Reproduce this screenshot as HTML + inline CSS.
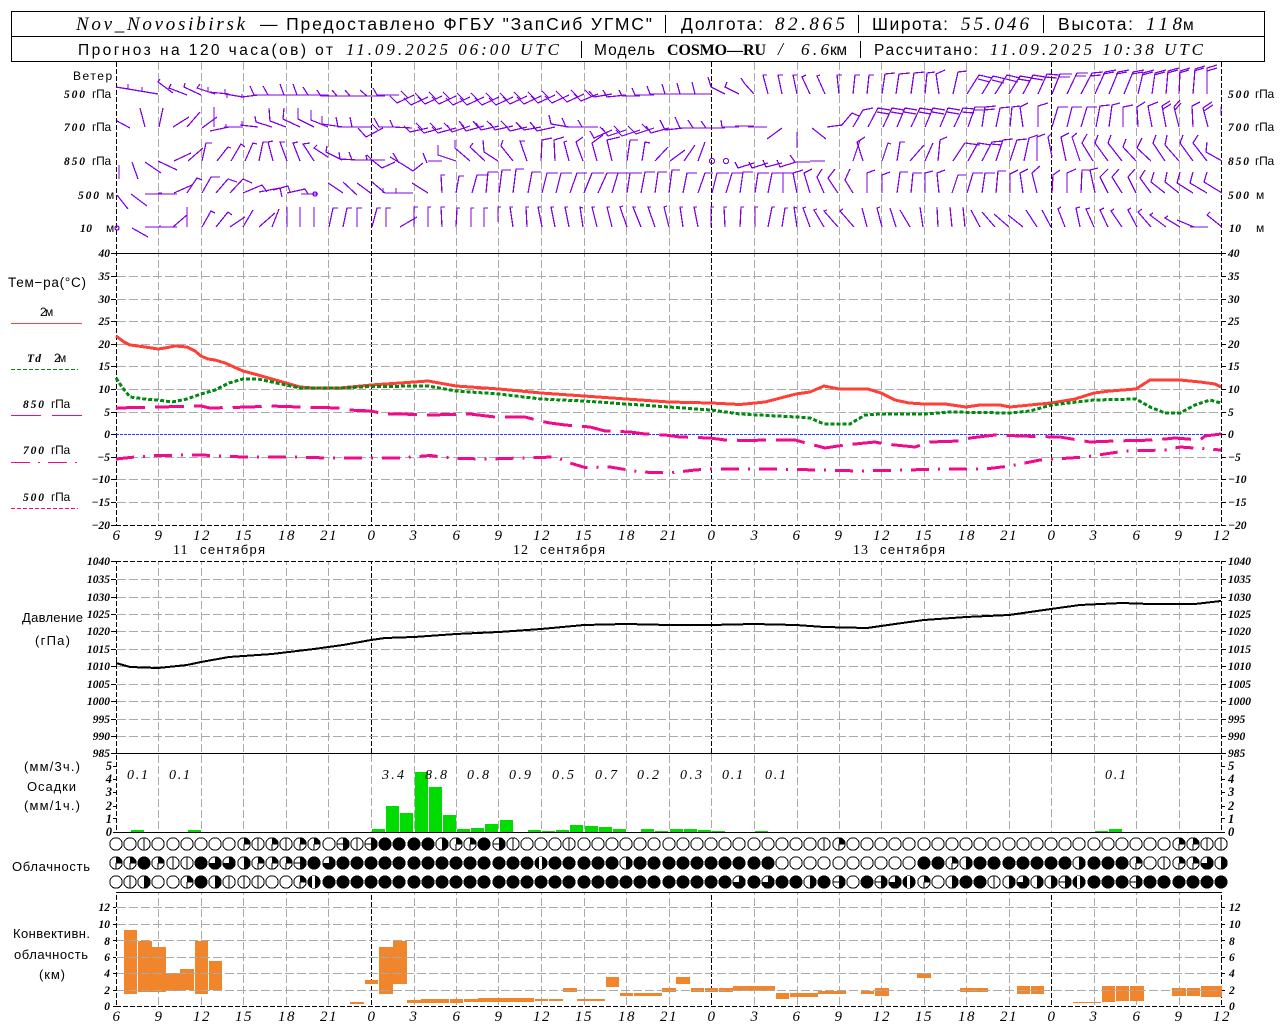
<!DOCTYPE html>
<html lang="ru"><head><meta charset="utf-8"><title>Nov_Novosibirsk</title>
<style>
html,body{margin:0;padding:0;background:#fff}
svg{display:block}
text{fill:#000;font-family:"Liberation Sans",sans-serif;font-size:13px;shape-rendering:auto}
.h1{font-size:17.5px}
.h2{font-size:15.5px}
.i{font-family:"Liberation Serif",serif;font-style:italic}
.a{font-family:"Liberation Serif",serif;font-style:italic;font-weight:bold;font-size:11.5px}
.x{font-family:"Liberation Serif",serif;font-style:italic;font-size:15px;text-anchor:middle;letter-spacing:1.5px}
.l{font-size:12px;letter-spacing:.8px}
.e{text-anchor:end}
.m{text-anchor:middle}
.w{fill:none;stroke:#7f00e6;stroke-width:1.25}
</style></head><body>
<svg width="1280" height="1024" viewBox="0 0 1280 1024" shape-rendering="crispEdges" xmlns="http://www.w3.org/2000/svg">
<defs>
<circle id="c" r="6.2" fill="#fff" stroke="#000"/>
<g id="o"><use href="#c"/></g>
<g id="v"><use href="#c"/><path d="M0-6V6" stroke="#000"/></g>
<g id="q"><use href="#c"/><path d="M0 0V-6A6 6 0 0 1 6 0Z"/><path d="M0 0V6M0 0H6" stroke="#000"/></g>
<g id="h"><use href="#c"/><path d="M0-6A6 6 0 0 1 0 6Z"/></g>
<g id="t"><use href="#c"/><path d="M0-6A6 6 0 1 1-6 0H0Z"/></g>
<g id="e"><use href="#c"/><path d="M0-6A6 6 0 0 1 0 6Z"/><path d="M-6 0H0" stroke="#000"/></g>
<circle id="f" r="6.6"/>
<g id="n"><circle r="6.6"/><rect x="-2" y="-6" width="3" height="12" fill="#fff"/></g>
</defs>
<rect width="1280" height="1024" fill="#fff"/>

<!-- vertical grid -->
<path fill="none" stroke="#aaa" stroke-dasharray="8 3" d="M158.5 62V1006M201.5 62V1006M243.5 62V1006M286.5 62V1006M328.5 62V1006M414.5 62V1006M456.5 62V1006M498.5 62V1006M541.5 62V1006M584.5 62V1006M626.5 62V1006M669.5 62V1006M754.5 62V1006M797.5 62V1006M839.5 62V1006M881.5 62V1006M924.5 62V1006M966.5 62V1006M1009.5 62V1006M1094.5 62V1006M1136.5 62V1006M1179.5 62V1006"/>
<path fill="none" stroke="#000" stroke-dasharray="5 2" d="M116.5 62V1006M371.5 62V1006M711.5 62V1006M1051.5 62V1006M1221.5 62V1006"/>
<path fill="none" stroke="#fff" d="M371.5 754V832M711.5 754V832M1051.5 754V832"/>
<path fill="none" stroke="#aaa" stroke-dasharray="8 3" d="M371.5 754V832M711.5 754V832M1051.5 754V832"/>
<rect x="100" y="526" width="1135" height="35" fill="#fff"/>
<rect x="100" y="833" width="1135" height="59" fill="#fff"/>

<!-- horizontal grid -->
<path fill="none" stroke="#aaa" stroke-dasharray="9 3" d="M117 276.5H1221M117 299.5H1221M117 321.5H1221M117 344.5H1221M117 366.5H1221M117 389.5H1221M117 412.5H1221M117 457.5H1221M117 479.5H1221M117 502.5H1221M117 579.5H1221M117 597.5H1221M117 614.5H1221M117 631.5H1221M117 649.5H1221M117 666.5H1221M117 684.5H1221M117 701.5H1221M117 719.5H1221M117 736.5H1221"/>

<!-- solid and dotted horizontals, ticks -->
<path fill="none" stroke="#000" d="M116 253.5H1222M116 753.5H1222M116 832.5H1222M116 892.5H1222"/>
<path fill="none" stroke="#000" stroke-dasharray="5 2" d="M116 525.5H1222M116 561.5H1222M116 1006.5H1222"/>
<path fill="none" stroke="#000" d="M111 253.5h5M111 276.5h5M111 299.5h5M111 321.5h5M111 344.5h5M111 366.5h5M111 389.5h5M111 412.5h5M111 434.5h5M111 457.5h5M111 479.5h5M111 502.5h5M111 525.5h5M1221 253.5h5M1221 276.5h5M1221 299.5h5M1221 321.5h5M1221 344.5h5M1221 366.5h5M1221 389.5h5M1221 412.5h5M1221 434.5h5M1221 457.5h5M1221 479.5h5M1221 502.5h5M1221 525.5h5M111 561.5h5M111 579.5h5M111 597.5h5M111 614.5h5M111 631.5h5M111 649.5h5M111 666.5h5M111 684.5h5M111 701.5h5M111 719.5h5M111 736.5h5M111 753.5h5M1221 561.5h5M1221 579.5h5M1221 597.5h5M1221 614.5h5M1221 631.5h5M1221 649.5h5M1221 666.5h5M1221 684.5h5M1221 701.5h5M1221 719.5h5M1221 736.5h5M1221 753.5h5M113 766.5h3M113 779.5h3M113 792.5h3M113 806.5h3M113 818.5h3M113 832.5h3M1221 766.5h4M1221 779.5h4M1221 792.5h4M1221 806.5h4M1221 818.5h4M1221 832.5h4M113 907.5h3M113 924.5h3M113 940.5h3M113 957.5h3M113 973.5h3M113 990.5h3M113 1006.5h3M1221 907.5h4M1221 924.5h4M1221 940.5h4M1221 957.5h4M1221 973.5h4M1221 990.5h4M1221 1006.5h4"/>

<!-- header -->
<rect x="11.5" y="11.5" width="1253" height="50" fill="none" stroke="#000"/>
<path d="M11 36.5H1264M665.5 15V33M858.5 15V33M1043.5 15V33M581.5 41V58M860.5 41V58" stroke="#000" fill="none"/>
<text class="h1 i" x="76" y="30" textLength="169" style="font-size:19px">Nov_Novosibirsk</text>
<text class="h1" x="260" y="30" textLength="392">— Предоставлено ФГБУ "ЗапСиб УГМС"</text>
<text class="h1" x="681" y="30" textLength="82">Долгота:</text>
<text class="h1 i" x="775" y="30" textLength="70" style="font-size:19px">82.865</text>
<text class="h1" x="872" y="30" textLength="76">Широта:</text>
<text class="h1 i" x="961" y="30" textLength="68" style="font-size:19px">55.046</text>
<text class="h1" x="1058" y="30" textLength="75">Высота:</text>
<text class="h1 i" x="1146" y="30" textLength="36" style="font-size:19px">118</text>
<text class="h2" x="1183" y="30" textLength="10">м</text>
<text class="h2" x="78" y="55" textLength="255">Прогноз на 120 часа(ов) от</text>
<text class="h2 i" x="346" y="55" textLength="213" style="font-size:17px">11.09.2025 06:00 UTC</text>
<text class="h2" x="594" y="55" textLength="61">Модель</text>
<text class="h2" x="667" y="55" textLength="99" style="font-family:'Liberation Serif',serif;font-weight:bold;font-size:16px">COSMO—RU</text>
<text class="h2 i" x="778" y="55" style="font-size:18px">/</text>
<text class="h2 i" x="801" y="55" textLength="28" style="font-size:17px">6.6</text>
<text class="h2" x="830" y="55" textLength="17">км</text>
<text class="h2" x="874" y="55" textLength="104">Рассчитано:</text>
<text class="h2 i" x="990" y="55" textLength="213" style="font-size:17px">11.09.2025 10:38 UTC</text>

<!-- wind labels -->
<text class="l" x="73" y="80" textLength="40">Ветер</text>
<g>
<text class="a" x="64" y="98" textLength="21">500</text><text class="l" x="92" y="98" textLength="20">гПа</text>
<text class="a" x="64" y="131" textLength="21">700</text><text class="l" x="92" y="131" textLength="20">гПа</text>
<text class="a" x="64" y="165" textLength="21">850</text><text class="l" x="92" y="165" textLength="20">гПа</text>
<text class="a" x="78" y="199" textLength="21">500</text><text class="l" x="106" y="199">м</text>
<text class="a" x="80" y="232" textLength="12">10</text><text class="l" x="106" y="232">м</text>
<text class="a" x="1228" y="98" textLength="21">500</text><text class="l" x="1255" y="98" textLength="20">гПа</text>
<text class="a" x="1228" y="131" textLength="21">700</text><text class="l" x="1255" y="131" textLength="20">гПа</text>
<text class="a" x="1228" y="165" textLength="21">850</text><text class="l" x="1255" y="165" textLength="20">гПа</text>
<text class="a" x="1228" y="199" textLength="21">500</text><text class="l" x="1256" y="199">м</text>
<text class="a" x="1229" y="232" textLength="12">10</text><text class="l" x="1256" y="232">м</text>
</g>

<!-- wind barbs row 1 -->
<path class="w" d="M158 94L116 87M128 89v-5M142 92v-5M173 93L158 82l2-3M187 95L169 88l2-4M201 95L184 87l1-4M215 94L197 88l3-4M229 94L208 92v-5M243 97L225 94v-5M258 95L242 97M227 93v5M242 94v4M272 95H254L250 86M286 95H268L263 86M300 95H284L280 84M314 95H297L293 84M329 95H308L303 87M343 96H321L317 90M357 96H337L332 90M371 96H350L345 90M385 96H367L360 90M399 95H377L373 88M414 95L397 103L390 96M408 98L401 91M428 97L411 105L404 98M422 100L415 93M442 96L425 104L418 97M436 99L429 92M456 96L439 104L432 97M450 99L443 92M470 97L453 105L446 98M464 100L457 93M484 97L467 105L460 98M478 100L471 93M499 97L482 105L475 98M493 100L486 93M513 97L496 105L489 98M507 100L500 93M527 96L510 104L503 97M521 99L514 92M541 96L524 104L517 97M535 99L528 92M555 95L538 103L531 96M549 98L542 91M569 95L552 103L545 96M563 98L556 91M584 94L567 102L560 95M578 97L571 90M598 94L581 101L574 94M592 97L585 90M612 94L594 97L589 91M626 95L607 97L603 90M640 96L622 96L619 90M654 95H635L632 88M669 94H650L647 86M683 94H665L662 84M697 94H680L677 83M711 94H695L692 82M725 94L711 87L708 77M739 94L725 87L727 82M754 94L745 84L741 78M768 94L763 75h4M782 94L778 75h5M797 94L793 75h4M810 94L802 77l4-2M825 94L817 76l3-1M839 94L837 75h5M853 94L855 75h5M867 94L869 75h5M882 94L885 74l10-1M896 94L899 74l11-1M911 94L914 73l11-1M925 94L927 73l8-1M939 94L936 74l9-4M953 94L958 72l9-1M967 94L979 75l13 3m-14 1l12 3M982 94L993 76l13 3m-14 1l12 3M995 94L1007 75l13 3m-14 1l12 3M1009 94L1020 76l12 2m-14 1l12 2M1023 94L1033 75l12 2m-14 1l12 2M1038 94L1047 74l12 1m-14 2l12 1M1052 94L1060 74l12 0m-14 3l12 0M1067 94L1077 73l11 0m-13 3l11 0M1081 94L1092 73l11-1m-13 4l11-1M1095 94L1105 72l11-2m-13 4l11-2M1109 94L1118 72l11-2m-13 4l11-2M1124 94L1133 72l11-2m-12 4l11-2M1138 94L1143 73l11-3m-12 5l11-3M1152 94L1155 73l11-3m-12 5l11-3M1166 94L1168 71l11-3m-12 5l11-3M1179 94L1180 71l10-3m-11 5l10-3M1193 94L1195 69l10-3m-11 5l10-3M1207 94V68l10-3m-10 6l10-3"/>
<!-- wind barbs row 2 -->
<path class="w" d="M130 128L117 121M145 127L140 108M159 127L163 108M173 127L189 117M187 127L200 112M202 128L217 117M214 127V107M229 127L210 131M243 127H224M226 127v-3M258 127L240 125M242 125v-4M272 127L256 122L255 116M286 127L270 121L269 108M300 127L283 119L284 108M314 127L298 119V108M328 127L311 120V110M343 127L322 124V116M357 127H338L336 117M371 127H352L350 117M383 128L366 137L358 128M378 130L372 124M397 127H379L374 118M412 128L393 127L390 120M428 128L410 132L404 126M422 129L416 123M442 128L424 133L418 127M436 129L430 123M456 128L438 133L432 127M450 129L444 123M470 126L452 132L447 125M464 127L459 121M484 126L466 131L461 124M478 127L473 121M499 126L481 130L476 123M493 127L487 121M513 126L495 130L490 123M507 127L501 121M527 127L510 131L505 125M521 128L516 122M541 127L524 130L518 124M535 128L530 122M555 127L537 131L533 126M569 127L551 124L549 115M584 127H566L562 118M598 127H582L578 120M612 130L594 138L590 131M606 133L600 127M626 130L608 136L602 128M620 132L614 126M640 130L622 136L616 130M634 132L628 126M654 128L636 134L630 128M648 130L642 124M669 128L651 133L646 126M683 128L665 130L660 120M697 128H680L675 117M711 128H693L688 120M725 128H706L701 121M739 127H722L721 120M754 126H735M767 127H748M767 139L782 128M797 132V148M812 128L826 139M827 127L842 125L851 114M841 126L852 113l7 3M853 127L863 110l10-2M868 127L878 108l12 2m-13 2l12 2M883 127L892 108l12 2m-13 2l12 2M897 127L905 108l12 2m-13 2l12 2M911 127L920 108l12 2m-13 2l12 2M925 127L933 108l12 2m-13 2l12 2M940 127L948 108l12 2m-13 2l12 2M954 127L963 108l12 1m-13 3l12 1M968 127L975 107l12 0m-13 3l12 0M982 127L985 107l11-1m-12 4l11-1M996 127L1000 108l10-1M1010 127L1012 107l8-1M1023 127L1020 107l8-4M1038 127V106l10-3M1052 127L1058 107h10M1067 127L1072 107h10M1081 127L1087 107h10M1096 127L1100 106l10-1M1109 127L1112 105l8-2M1123 127V107l10-2M1138 127L1137 107l8-5M1152 127L1148 106l10-4M1166 127L1162 106l8-5m-7 8l8-5M1179 127L1174 107l6-7m-5 10l6-7M1193 127L1192 106l8-4M1208 127L1203 108l9-6m-8 9l9-6M1221 107v8"/>
<!-- wind barbs row 3 -->
<path class="w" d="M119 165V179M132 162L138 179M145 162L161 173M158 161L177 170M174 161L191 153M188 161L203 148M202 161L206 143h6M217 161L228 147l3 1M231 161L241 144l4 3M245 161L253 143l4 1M259 161L263 142h4M273 161L268 142l5-1M287 161L280 142h5M300 161L293 143l5-1M314 161L303 144l7-1M328 157L314 148l3-3M342 160L326 152l1-6M357 160L340 159l-1-7M371 160H352l-3-8M385 160H367l-1-5M367 155l5 5M395 162L382 168L372 160M393 153l6 10M402 164L390 157M423 163L413 171L402 164M423 153l4 10M428 161H440M442 161H430M456 161L438 155V145M470 161L455 148V140M485 161L470 147l3-4M498 161L484 152L483 140M513 161L501 146l2-6M527 161L520 141h5M541 161L542 140l10-2M555 161L554 140l10-3M569 161L564 142l3-1M583 161L576 142l7-5M597 161L592 143l11-8M612 161L607 140l13-3M627 161L630 140h8M642 161L645 142l5 1M655 161L668 147M670 161L685 150M684 161L695 145M698 161L705 142M754 163L738 168L735 162M768 163L752 168L749 162M782 163L766 167L763 160M796 162L780 167L777 160M810 162H795L790 155M810 161H825M853 161L860 140M863 161L857 142l8-5M882 161L888 143l3 1M897 161L900 142h5M910 161L924 145M925 161L933 143M938 161L940 140l7-3M953 161L965 143l15 2M968 161L978 143l13 2M982 161L992 142l11-1m-12 3l11 1M996 161L1003 140l10-1M1010 161L1017 140l10-1M1024 161L1029 138l9-3M1037 161V137l8-3M1052 157L1048 137l3-3M1066 161L1061 137l8-4M1080 161L1072 137l5-4M1093 161L1082 143l5-9M1108 161L1095 143l3-8M1122 161L1108 143l3-8M1136 161L1123 147l3-8M1151 161L1137 148l5-10M1165 161L1153 143l3-8M1179 161L1165 145l2-10M1193 161L1180 143l3-8M1207 161L1193 143l5-8M1222 161L1206 152l1-10"/>
<circle class="w" cx="712" cy="161" r="2.5"/><circle class="w" cx="726" cy="161" r="2.5"/>
<!-- wind barbs row 4 -->
<path class="w" d="M117 195L128 209M131 194L147 206M145 194H161M160 194h17M158 193h4M174 193L192 185M187 193L197 178l5 2M202 193L211 177h9M216 193L228 179l9 3M230 193L243 179l9 4M243 193L262 185l5 7M259 192L280 188l2 9M273 190L288 186l2 6M287 193L305 189l3 5M301 194H318M328 183L343 193M343 182L357 195M357 183L372 194M372 182L385 193M385 193H413M383 193v-5M396 193v-5M412 183L428 193M442 193L441 175h4M456 193L459 176h5M472 193L477 175h11M486 193L488 172h10M499 193L502 170h9M513 193L516 169h8M528 193L532 172h9M542 193L547 173h11M556 193L561 173h11M570 193L577 173h10M584 193L592 173h12M598 193L607 173h11M612 193L618 173h11M627 193L630 173h12M641 193L645 172h10M655 193L658 172h9M669 193L672 170h8M683 193L687 173h10M698 193L705 173h8M712 193L717 173h12M726 193L732 173h11M740 193L743 172h10M755 193L758 173h11M768 193L772 173h12M783 193V173h10M797 193L793 173l10-3M810 193L804 173l8-4M824 193L817 177l5-8M838 193L828 178l7-9M853 193L845 180l5-11M867 193V173l8-3M882 193V175l8-3M897 193L900 172h8M911 193L913 173h9M925 193V173l8-2M939 193L937 173l8-3M952 193L958 175h8M967 193L973 173h10M982 193L985 173h10M996 193L998 171h8M1010 193V174l8-4M1023 193L1020 173l8-4M1037 193L1032 173l8-7M1052 193L1053 175l7-5M1067 193V173l9-4M1081 193L1082 170h8M1095 193L1090 170l8-2M1108 193L1100 177l8-8M1122 193L1112 177l7-8M1136 193L1128 177l7-8M1151 193L1140 178l5-8M1165 193L1151 182l3-10M1179 193L1165 182l2-10M1193 193L1177 183l3-11M1207 193L1190 183l3-11M1222 193L1204 182l3-10"/>
<circle class="w" cx="315" cy="194" r="2"/>
<!-- wind barbs row 5 -->
<path class="w" d="M132 228L148 237M145 227H160M158 227h19M160 227v-2M173 227L187 215M187 227V207M202 227L211 211l4 2M216 227L228 212l4 3M230 227L245 217M243 227L253 210M259 227L275 213M272 227L279 209M287 227V207M300 227V207M314 227V207M329 227L333 208h5M343 227L347 208h5M357 227V208h5M372 227L377 208h4M386 227V208h5M400 227L417 217M414 227V207h4M428 227V207h3M442 227L441 207h4M456 227L457 208h3M471 227V208h3M484 227V208h4M498 222V207h3M513 227L510 207h3M527 227L526 207h3M542 227L538 207h3M555 227L551 207h3M569 227L565 207h3M583 227L580 207l3 1M597 227L592 207h3M612 227L607 207h3M627 227L620 207l3-1M641 227L633 207h3M655 227L648 207h3M669 227L664 207l3-1M683 227L680 207h3M698 227L694 207h3M711 227V207h3M725 227L724 207h3M740 227L741 207h3M755 227V207h3M768 227L772 207h3M782 227L785 208h3M797 227L794 207l3 1M810 227L803 208l3-1M824 227L814 210l3-1M838 227L824 211l3-1M854 227L840 211l3-2M867 227L862 208M882 227L877 208l3-1M896 227L890 208M910 227L900 210M923 227L920 207M938 227L937 207M952 227L950 207M965 227L963 207M980 227L971 210M995 227L982 212M1009 227L994 214M1023 227L1008 215M1037 227L1026 210M1051 227L1042 210M1065 227L1058 209l3-2M1080 227L1076 208l4-1M1094 227L1086 209l4-1M1108 227L1100 210l4-2M1122 227L1111 211l3-2M1137 227L1128 210l3-2M1151 227L1138 212l4-3M1166 227L1150 215l3-2M1180 227L1165 218l3-2M1194 227L1177 220M1208 227H1190M1207 227H1198M1222 227L1207 215l3-3"/>
<circle class="w" cx="117" cy="228" r="2"/>

<!-- temp axis -->
<g class="tk">
<text class="a e" x="110" y="257">40</text><text class="a e" x="110" y="280">35</text><text class="a e" x="110" y="303">30</text><text class="a e" x="110" y="325">25</text><text class="a e" x="110" y="348">20</text><text class="a e" x="110" y="370">15</text><text class="a e" x="110" y="393">10</text><text class="a e" x="110" y="416">5</text><text class="a e" x="110" y="438">0</text><text class="a e" x="110" y="461">−5</text><text class="a e" x="110" y="483">−10</text><text class="a e" x="110" y="506">−15</text><text class="a e" x="110" y="529">−20</text>
<text class="a" x="1228" y="257">40</text><text class="a" x="1228" y="280">35</text><text class="a" x="1228" y="303">30</text><text class="a" x="1228" y="325">25</text><text class="a" x="1228" y="348">20</text><text class="a" x="1228" y="370">15</text><text class="a" x="1228" y="393">10</text><text class="a" x="1228" y="416">5</text><text class="a" x="1228" y="438">0</text><text class="a" x="1228" y="461">−5</text><text class="a" x="1228" y="483">−10</text><text class="a" x="1228" y="506">−15</text><text class="a" x="1228" y="529">−20</text>
</g>

<!-- temp curves -->
<path d="M116 434.5H1221" stroke="#1f3cff" fill="none" stroke-dasharray="3 1"/>
<polyline fill="none" stroke="#f00a8c" stroke-width="3" stroke-dasharray="29 10" points="116 408 201 406 210 408 250 407 270 406 300 407 340 408 348 410 371 411 385 414 400 414 430 415 470 414 495 417 525 417 540 421 550 423 565 425 590 427 605 431 630 432 645 434 665 435 680 437 710 438 725 440 750 440.5 765 440 795 440 825 448 845 445 875 442 885 444 915 447 930 442 960 441 970 438 995 435 1035 436.5 1060 437 1090 442 1115 441 1155 440 1175 438 1200 440 1205 436 1221 434"/>
<polyline fill="none" stroke="#f00a8c" stroke-width="3" stroke-dasharray="18 9 2 9" points="116 459 135 457 158 455.5 201 455 243 457 286 457 330 458 371 458 400 458 430 455.5 456 458.5 490 459 520 458 555 457 570 463 585 467.5 610 467 640 472 670 473 695 470 710 469 770 469 820 470 860 471 905 470 950 469 985 469 1010 466 1040 460 1085 457 1125 451 1165 450 1180 447 1221 450"/>
<polyline fill="none" stroke="#ff4038" stroke-width="3" points="116 336 124 342 130 345 145 347 158 349 165 348 175 346 187 347 195 351 201 356 208 359 215 360 225 363 243 371 258 375 272 379 286 383 300 387 314 388 340 388 371 385 400 383 428 381 456 386 499 389 541 393 584 396 626 399 669 402 711 403 740 404.5 765 402 796 394 810 392 824 386 839 389 868 389 881 393 895 400 909 403 924 404 945 404 966 407 980 405 1000 405 1010 407 1030 405 1051 403 1075 399 1094 393 1110 391 1136 389 1150 380 1180 380 1200 382 1215 384 1221 387"/>
<polyline fill="none" stroke="#008a10" stroke-width="3" stroke-dasharray="4 2" points="116 378 122 387 130 397 145 399 158 400 172 402 187 399 201 394 215 390 229 383 243 379 258 379 286 385 300 388 314 388 340 388 371 386.5 428 386 456 391 499 394 541 399 584 401 626 404 669 407 711 410 740 414 796 417 810 418 824 424 850 424 865 415 881 414 924 414 950 412 1009 413 1030 411 1051 405 1094 400 1136 399 1150 407 1165 413 1180 413 1195 405 1210 400 1221 403"/>

<!-- legend -->
<text x="8" y="287" textLength="78" style="font-size:13.5px">Тем−ра(°С)</text>
<text class="l" x="40" y="316" textLength="14">2м</text>
<path d="M11 323.5H82" stroke="#ff4038" fill="none"/>
<text class="a" x="27" y="362" textLength="14">Td</text><text class="l" x="54" y="362" textLength="13">2м</text>
<path d="M11 369.5H78" stroke="#008a10" fill="none" stroke-dasharray="4 2"/>
<text class="a" x="23" y="408" textLength="21">850</text><text class="l" x="51" y="408" textLength="20">гПа</text>
<path d="M11 415.5H41M52 415.5H82" stroke="#f00a8c" fill="none"/>
<text class="a" x="23" y="454" textLength="21">700</text><text class="l" x="51" y="454" textLength="20">гПа</text>
<path d="M11 462.5H30M38 462.5H40M48 462.5H67M75 462.5H77" stroke="#f00a8c" fill="none"/>
<text class="a" x="23" y="501" textLength="21">500</text><text class="l" x="51" y="501" textLength="20">гПа</text>
<path d="M11 508.5H78" stroke="#f00a8c" fill="none" stroke-dasharray="4 2"/>

<!-- x labels top -->
<g>
<text class="x" x="117" y="540">6</text><text class="x" x="159" y="540">9</text><text class="x" x="202" y="540">12</text><text class="x" x="244" y="540">15</text><text class="x" x="287" y="540">18</text><text class="x" x="329" y="540">21</text><text class="x" x="372" y="540">0</text><text class="x" x="414" y="540">3</text><text class="x" x="457" y="540">6</text><text class="x" x="499" y="540">9</text><text class="x" x="542" y="540">12</text><text class="x" x="584" y="540">15</text><text class="x" x="627" y="540">18</text><text class="x" x="669" y="540">21</text><text class="x" x="712" y="540">0</text><text class="x" x="755" y="540">3</text><text class="x" x="797" y="540">6</text><text class="x" x="839" y="540">9</text><text class="x" x="882" y="540">12</text><text class="x" x="924" y="540">15</text><text class="x" x="967" y="540">18</text><text class="x" x="1009" y="540">21</text><text class="x" x="1052" y="540">0</text><text class="x" x="1094" y="540">3</text><text class="x" x="1137" y="540">6</text><text class="x" x="1179" y="540">9</text><text class="x" x="1222" y="540">12</text>
</g>
<text x="173" y="554" style="font-size:14px;font-family:'Liberation Serif',serif;letter-spacing:1px">11</text><text x="200" y="554" textLength="65" style="font-size:13px">сентября</text>
<text x="513" y="554" style="font-size:14px;font-family:'Liberation Serif',serif;letter-spacing:1px">12</text><text x="540" y="554" textLength="65" style="font-size:13px">сентября</text>
<text x="853" y="554" style="font-size:14px;font-family:'Liberation Serif',serif;letter-spacing:1px">13</text><text x="880" y="554" textLength="65" style="font-size:13px">сентября</text>

<!-- pressure -->
<text class="a e" x="110" y="565">1040</text><text class="a e" x="110" y="583">1035</text><text class="a e" x="110" y="601">1030</text><text class="a e" x="110" y="618">1025</text><text class="a e" x="110" y="635">1020</text><text class="a e" x="110" y="653">1015</text><text class="a e" x="110" y="670">1010</text><text class="a e" x="110" y="688">1005</text><text class="a e" x="110" y="705">1000</text><text class="a e" x="110" y="723">995</text><text class="a e" x="110" y="740">990</text><text class="a e" x="110" y="757">985</text>
<text class="a" x="1228" y="565">1040</text><text class="a" x="1228" y="583">1035</text><text class="a" x="1228" y="601">1030</text><text class="a" x="1228" y="618">1025</text><text class="a" x="1228" y="635">1020</text><text class="a" x="1228" y="653">1015</text><text class="a" x="1228" y="670">1010</text><text class="a" x="1228" y="688">1005</text><text class="a" x="1228" y="705">1000</text><text class="a" x="1228" y="723">995</text><text class="a" x="1228" y="740">990</text><text class="a" x="1228" y="757">985</text>
<text x="22" y="622" textLength="61">Давление</text>
<text x="35" y="645" textLength="35">(гПа)</text>
<polyline fill="none" stroke="#000" stroke-width="2" points="116 663 130 667 158 668 187 665 201 662 229 657 272 654 314 649 343 645 371 640 385 638 414 637 456 634 499 632 541 629 584 625 626 624 669 625 711 625 754 624 796 625 824 627 867 628 895 624 924 620 966 617 1009 615 1051 609 1080 605 1122 603 1150 604 1195 604 1221 601"/>

<!-- precip -->
<text x="24" y="771" textLength="56">(мм/3ч.)</text>
<text x="27" y="791" textLength="49">Осадки</text>
<text x="24" y="810" textLength="56">(мм/1ч.)</text>
<text class="a e" x="112" y="770" style="font-size:12.5px">5</text><text class="a e" x="112" y="783" style="font-size:12.5px">4</text><text class="a e" x="112" y="796" style="font-size:12.5px">3</text><text class="a e" x="112" y="810" style="font-size:12.5px">2</text><text class="a e" x="112" y="823" style="font-size:12.5px">1</text><text class="a e" x="112" y="836" style="font-size:12.5px">0</text>
<text class="a" x="1228" y="770" style="font-size:12.5px">5</text><text class="a" x="1228" y="783" style="font-size:12.5px">4</text><text class="a" x="1228" y="796" style="font-size:12.5px">3</text><text class="a" x="1228" y="810" style="font-size:12.5px">2</text><text class="a" x="1228" y="823" style="font-size:12.5px">1</text><text class="a" x="1228" y="836" style="font-size:12.5px">0</text>
<path fill="#00dc00" d="M131 830h13v2h-13zM188 830h13v2h-13zM372 829h13v3h-13zM386 806h13v26h-13zM400 813h13v19h-13zM415 772h13v60h-13zM429 787h13v45h-13zM443 815h13v17h-13zM457 829h13v3h-13zM471 828h13v4h-13zM485 824h13v8h-13zM500 820h13v12h-13zM528 830h13v2h-13zM542 831h13v1h-13zM556 830h13v2h-13zM570 825h13v7h-13zM585 826h13v6h-13zM599 827h13v5h-13zM613 829h13v3h-13zM641 829h13v3h-13zM655 831h13v1h-13zM670 829h13v3h-13zM684 829h13v3h-13zM698 830h13v2h-13zM712 831h13v1h-13zM755 831h13v1h-13zM1095 831h13v1h-13zM1109 829h13v3h-13z"/>
<g class="i" style="font-size:14px">
<text class="i" style="font-size:14px" x="127" y="779" textLength="21">0.1</text><text class="i" style="font-size:14px" x="169" y="779" textLength="21">0.1</text><text class="i" style="font-size:14px" x="382" y="779" textLength="22">3.4</text><text class="i" style="font-size:14px" x="425" y="779" textLength="22">8.8</text><text class="i" style="font-size:14px" x="467" y="779" textLength="22">0.8</text><text class="i" style="font-size:14px" x="509" y="779" textLength="22">0.9</text><text class="i" style="font-size:14px" x="552" y="779" textLength="22">0.5</text><text class="i" style="font-size:14px" x="595" y="779" textLength="22">0.7</text><text class="i" style="font-size:14px" x="637" y="779" textLength="22">0.2</text><text class="i" style="font-size:14px" x="680" y="779" textLength="22">0.3</text><text class="i" style="font-size:14px" x="722" y="779" textLength="21">0.1</text><text class="i" style="font-size:14px" x="765" y="779" textLength="21">0.1</text><text class="i" style="font-size:14px" x="1105" y="779" textLength="21">0.1</text>
</g>

<!-- clouds -->
<text x="12" y="871" textLength="78">Облачность</text>
<g transform="translate(0,844)">
<use href="#o" x="116"/><use href="#o" x="130"/><use href="#v" x="144"/><use href="#o" x="158"/><use href="#o" x="173"/><use href="#o" x="187"/><use href="#o" x="201"/><use href="#o" x="215"/><use href="#o" x="229"/><use href="#q" x="244"/><use href="#v" x="258"/><use href="#q" x="272"/><use href="#v" x="286"/><use href="#q" x="300"/><use href="#q" x="314"/><use href="#o" x="329"/><use href="#e" x="343"/><use href="#v" x="357"/><use href="#e" x="371"/><use href="#f" x="385"/><use href="#f" x="399"/><use href="#f" x="414"/><use href="#f" x="428"/><use href="#h" x="442"/><use href="#q" x="456"/><use href="#q" x="470"/><use href="#f" x="484"/><use href="#e" x="499"/><use href="#v" x="513"/><use href="#o" x="527"/><use href="#o" x="541"/><use href="#o" x="555"/><use href="#v" x="569"/><use href="#o" x="584"/><use href="#o" x="598"/><use href="#o" x="612"/><use href="#o" x="626"/><use href="#o" x="640"/><use href="#o" x="654"/><use href="#o" x="669"/><use href="#o" x="683"/><use href="#o" x="697"/><use href="#o" x="711"/><use href="#o" x="725"/><use href="#o" x="739"/><use href="#o" x="754"/><use href="#o" x="768"/><use href="#o" x="782"/><use href="#o" x="796"/><use href="#o" x="810"/><use href="#v" x="824"/><use href="#q" x="839"/><use href="#o" x="853"/><use href="#o" x="867"/><use href="#o" x="881"/><use href="#o" x="895"/><use href="#o" x="909"/><use href="#o" x="924"/><use href="#o" x="938"/><use href="#o" x="952"/><use href="#o" x="966"/><use href="#o" x="980"/><use href="#o" x="994"/><use href="#o" x="1009"/><use href="#o" x="1023"/><use href="#o" x="1037"/><use href="#o" x="1051"/><use href="#o" x="1065"/><use href="#o" x="1079"/><use href="#o" x="1094"/><use href="#o" x="1108"/><use href="#o" x="1122"/><use href="#o" x="1136"/><use href="#o" x="1150"/><use href="#o" x="1164"/><use href="#q" x="1179"/><use href="#q" x="1193"/><use href="#v" x="1207"/><use href="#v" x="1221"/>
</g>
<g transform="translate(0,863)">
<use href="#q" x="116"/><use href="#q" x="130"/><use href="#f" x="144"/><use href="#q" x="158"/><use href="#v" x="173"/><use href="#v" x="187"/><use href="#f" x="201"/><use href="#t" x="215"/><use href="#t" x="229"/><use href="#h" x="244"/><use href="#q" x="258"/><use href="#q" x="272"/><use href="#q" x="286"/><use href="#e" x="300"/><use href="#f" x="314"/><use href="#t" x="329"/><use href="#f" x="343"/><use href="#f" x="357"/><use href="#f" x="371"/><use href="#f" x="385"/><use href="#f" x="399"/><use href="#f" x="414"/><use href="#f" x="428"/><use href="#f" x="442"/><use href="#f" x="456"/><use href="#f" x="470"/><use href="#f" x="484"/><use href="#f" x="499"/><use href="#f" x="513"/><use href="#f" x="527"/><use href="#n" x="541"/><use href="#f" x="555"/><use href="#f" x="569"/><use href="#f" x="584"/><use href="#f" x="598"/><use href="#f" x="612"/><use href="#h" x="626"/><use href="#f" x="640"/><use href="#f" x="654"/><use href="#f" x="669"/><use href="#f" x="683"/><use href="#f" x="697"/><use href="#f" x="711"/><use href="#f" x="725"/><use href="#f" x="739"/><use href="#f" x="754"/><use href="#f" x="768"/><use href="#o" x="782"/><use href="#o" x="796"/><use href="#o" x="810"/><use href="#o" x="824"/><use href="#o" x="839"/><use href="#o" x="853"/><use href="#o" x="867"/><use href="#o" x="881"/><use href="#o" x="895"/><use href="#o" x="909"/><use href="#f" x="924"/><use href="#f" x="938"/><use href="#q" x="952"/><use href="#h" x="966"/><use href="#f" x="980"/><use href="#f" x="994"/><use href="#f" x="1009"/><use href="#f" x="1023"/><use href="#f" x="1037"/><use href="#f" x="1051"/><use href="#f" x="1065"/><use href="#h" x="1079"/><use href="#f" x="1094"/><use href="#f" x="1108"/><use href="#f" x="1122"/><use href="#q" x="1136"/><use href="#o" x="1150"/><use href="#v" x="1164"/><use href="#q" x="1179"/><use href="#q" x="1193"/><use href="#t" x="1207"/><use href="#h" x="1221"/>
</g>
<g transform="translate(0,882)">
<use href="#o" x="116"/><use href="#v" x="130"/><use href="#h" x="144"/><use href="#o" x="158"/><use href="#o" x="173"/><use href="#q" x="187"/><use href="#f" x="201"/><use href="#h" x="215"/><use href="#v" x="229"/><use href="#v" x="244"/><use href="#v" x="258"/><use href="#o" x="272"/><use href="#o" x="286"/><use href="#q" x="300"/><use href="#n" x="314"/><use href="#f" x="329"/><use href="#f" x="343"/><use href="#f" x="357"/><use href="#f" x="371"/><use href="#f" x="385"/><use href="#f" x="399"/><use href="#f" x="414"/><use href="#f" x="428"/><use href="#f" x="442"/><use href="#f" x="456"/><use href="#f" x="470"/><use href="#f" x="484"/><use href="#f" x="499"/><use href="#f" x="513"/><use href="#f" x="527"/><use href="#f" x="541"/><use href="#f" x="555"/><use href="#f" x="569"/><use href="#f" x="584"/><use href="#f" x="598"/><use href="#f" x="612"/><use href="#f" x="626"/><use href="#f" x="640"/><use href="#f" x="654"/><use href="#f" x="669"/><use href="#f" x="683"/><use href="#f" x="697"/><use href="#f" x="711"/><use href="#f" x="725"/><use href="#t" x="739"/><use href="#f" x="754"/><use href="#t" x="768"/><use href="#f" x="782"/><use href="#f" x="796"/><use href="#h" x="810"/><use href="#f" x="824"/><use href="#e" x="839"/><use href="#o" x="853"/><use href="#f" x="867"/><use href="#e" x="881"/><use href="#t" x="895"/><use href="#n" x="909"/><use href="#q" x="924"/><use href="#o" x="938"/><use href="#h" x="952"/><use href="#f" x="966"/><use href="#f" x="980"/><use href="#v" x="994"/><use href="#h" x="1009"/><use href="#t" x="1023"/><use href="#h" x="1037"/><use href="#h" x="1051"/><use href="#e" x="1065"/><use href="#n" x="1079"/><use href="#f" x="1094"/><use href="#f" x="1108"/><use href="#f" x="1122"/><use href="#e" x="1136"/><use href="#f" x="1150"/><use href="#f" x="1164"/><use href="#f" x="1179"/><use href="#f" x="1193"/><use href="#f" x="1207"/><use href="#f" x="1221"/>
</g>

<!-- convective -->
<text x="13" y="938" textLength="77">Конвективн.</text>
<text x="14" y="959" textLength="74">облачность</text>
<text x="39" y="979" textLength="26">(км)</text>
<path fill="#f0852c" d="M124 930h13v64h-13zM138 941h14v51h-14zM152 947h14v45h-14zM166 973h14v18h-14zM180 969h14v21h-14zM195 941h13v53h-13zM209 961h13v29h-13zM350 1002h14v2h-14zM365 980h13v4h-13zM379 947h14v47h-14zM393 941h14v43h-14zM407 1000h14v3h-14zM421 999h28v4h-28zM450 999h13v4h-13zM464 999h14v3h-14zM478 998h56v4h-56zM535 999h13v2h-13zM549 999h14v2h-14zM563 988h14v4h-14zM577 999h28v2h-28zM606 977h13v10h-13zM620 993h13v3h-13zM634 993h28v3h-28zM662 988h14v4h-14zM676 977h14v7h-14zM691 988h13v4h-13zM705 988h13v4h-13zM719 988h14v4h-14zM733 986h42v5h-42zM776 993h13v6h-13zM790 993h28v4h-28zM818 991h28v3h-28zM861 991h13v3h-13zM875 988h14v8h-14zM917 973h14v5h-14zM960 988h28v4h-28zM1017 986h13v8h-13zM1031 986h13v8h-13zM1073 1002h28v1h-28zM1102 986h13v16h-13zM1116 986h13v15h-13zM1130 986h14v15h-14zM1172 988h14v8h-14zM1187 988h13v8h-13zM1201 986h21v11h-21z"/>
<path fill="none" stroke="#aaa" stroke-dasharray="9 3" d="M117 907.5H1221M117 924.5H1221M117 940.5H1221M117 957.5H1221M117 973.5H1221M117 990.5H1221"/>
<text class="a e" x="110" y="911">12</text><text class="a e" x="110" y="928">10</text><text class="a e" x="110" y="945">8</text><text class="a e" x="110" y="961">6</text><text class="a e" x="110" y="977">4</text><text class="a e" x="110" y="994">2</text><text class="a e" x="110" y="1010">0</text>
<text class="a" x="1229" y="911">12</text><text class="a" x="1229" y="928">10</text><text class="a" x="1229" y="945">8</text><text class="a" x="1229" y="961">6</text><text class="a" x="1229" y="977">4</text><text class="a" x="1229" y="994">2</text><text class="a" x="1229" y="1010">0</text>
<g>
<text class="x" x="117" y="1021">6</text><text class="x" x="159" y="1021">9</text><text class="x" x="202" y="1021">12</text><text class="x" x="244" y="1021">15</text><text class="x" x="287" y="1021">18</text><text class="x" x="329" y="1021">21</text><text class="x" x="372" y="1021">0</text><text class="x" x="414" y="1021">3</text><text class="x" x="457" y="1021">6</text><text class="x" x="499" y="1021">9</text><text class="x" x="542" y="1021">12</text><text class="x" x="584" y="1021">15</text><text class="x" x="627" y="1021">18</text><text class="x" x="669" y="1021">21</text><text class="x" x="712" y="1021">0</text><text class="x" x="755" y="1021">3</text><text class="x" x="797" y="1021">6</text><text class="x" x="839" y="1021">9</text><text class="x" x="882" y="1021">12</text><text class="x" x="924" y="1021">15</text><text class="x" x="967" y="1021">18</text><text class="x" x="1009" y="1021">21</text><text class="x" x="1052" y="1021">0</text><text class="x" x="1094" y="1021">3</text><text class="x" x="1137" y="1021">6</text><text class="x" x="1179" y="1021">9</text><text class="x" x="1222" y="1021">12</text>
</g>
</svg>
</body></html>
